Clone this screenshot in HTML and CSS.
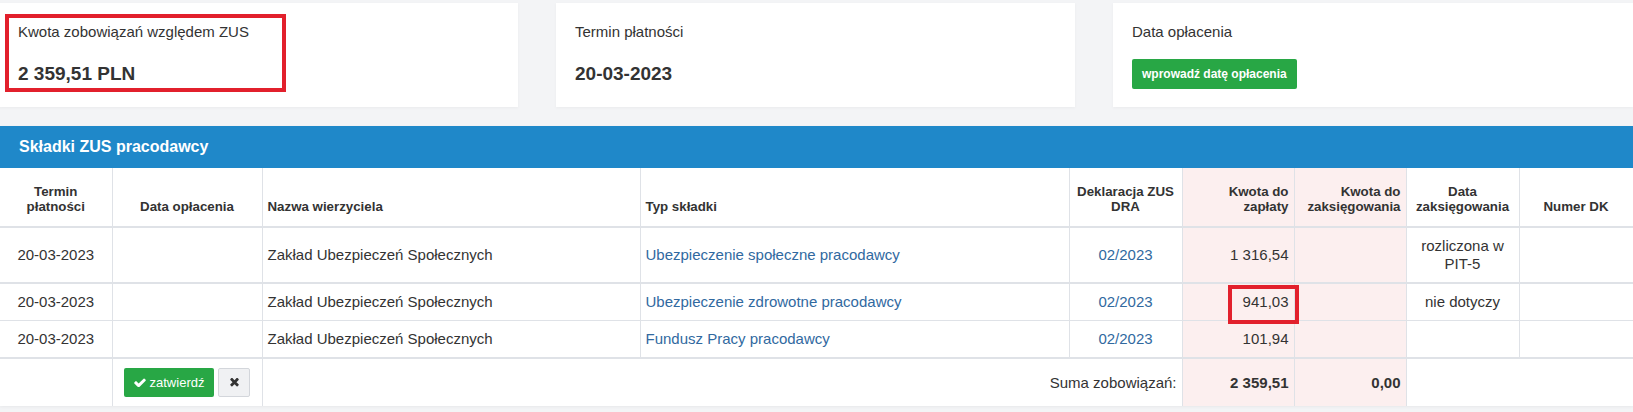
FILE: index.html
```html
<!DOCTYPE html>
<html lang="pl">
<head>
<meta charset="utf-8">
<title>Składki ZUS pracodawcy</title>
<link rel="stylesheet" href="styles.css">
</head>
<body>
<div class="page">
  <div class="cards">
    <div class="card">
      <div class="card-label">Kwota zobowiązań względem ZUS</div>
      <div class="card-value">2 359,51 PLN</div>
      <div class="mark mark-card"></div>
    </div>
    <div class="card">
      <div class="card-label">Termin płatności</div>
      <div class="card-value">20-03-2023</div>
    </div>
    <div class="card card-last">
      <div class="card-label">Data opłacenia</div>
      <span class="btn-date">wprowadź datę opłacenia</span>
    </div>
  </div>

  <section class="panel">
    <div class="panel-head">Składki ZUS pracodawcy</div>
    <table class="grid">
      <colgroup>
        <col class="c1"><col class="c2"><col class="c3"><col class="c4"><col class="c5"><col class="c6"><col class="c7"><col class="c8"><col class="c9">
      </colgroup>
      <thead>
        <tr>
          <th class="center">Termin<br>płatności</th>
          <th class="center">Data opłacenia</th>
          <th class="left">Nazwa wierzyciela</th>
          <th class="left">Typ składki</th>
          <th class="center">Deklaracja ZUS<br>DRA</th>
          <th class="right pink">Kwota do<br>zapłaty</th>
          <th class="right pink">Kwota do<br>zaksięgowania</th>
          <th class="center">Data<br>zaksięgowania</th>
          <th class="center last">Numer DK</th>
        </tr>
      </thead>
      <tbody>
        <tr class="row-thick">
          <td class="center">20-03-2023</td>
          <td></td>
          <td>Zakład Ubezpieczeń Społecznych</td>
          <td><a class="link" href="#">Ubezpieczenie społeczne pracodawcy</a></td>
          <td class="center"><a class="link" href="#">02/2023</a></td>
          <td class="right pink">1 316,54</td>
          <td class="pink"></td>
          <td class="center">rozliczona w<br>PIT-5</td>
          <td class="last"></td>
        </tr>
        <tr>
          <td class="center">20-03-2023</td>
          <td></td>
          <td>Zakład Ubezpieczeń Społecznych</td>
          <td><a class="link" href="#">Ubezpieczenie zdrowotne pracodawcy</a></td>
          <td class="center"><a class="link" href="#">02/2023</a></td>
          <td class="right pink anchor">941,03<div class="mark mark-cell"></div></td>
          <td class="pink"></td>
          <td class="center">nie dotyczy</td>
          <td class="last"></td>
        </tr>
        <tr class="row-thick">
          <td class="center">20-03-2023</td>
          <td></td>
          <td>Zakład Ubezpieczeń Społecznych</td>
          <td><a class="link" href="#">Fundusz Pracy pracodawcy</a></td>
          <td class="center"><a class="link" href="#">02/2023</a></td>
          <td class="right pink">101,94</td>
          <td class="pink"></td>
          <td></td>
          <td class="last"></td>
        </tr>
      </tbody>
      <tfoot>
        <tr>
          <td></td>
          <td class="center">
            <div class="actions">
              <span class="btn-ok"><svg class="ico-check" viewBox="100 300 1592 1150" aria-hidden="true"><path d="M1671 566q0 40-28 68l-724 724-136 136q-28 28-68 28t-68-28l-136-136-362-362q-28-28-28-68t28-68l136-136q28-28 68-28t68 28l294 295 656-657q28-28 68-28t68 28l136 136q28 28 28 68z"/></svg>zatwierdź</span>
              <span class="btn-cancel"><svg class="ico-times" viewBox="80 380 1248 1248" aria-hidden="true"><path d="M1298 1322q0 40-28 68l-136 136q-28 28-68 28t-68-28l-294-294-294 294q-28 28-68 28t-68-28l-136-136q-28-28-28-68t28-68l294-294-294-294q-28-28-28-68t28-68l136-136q28-28 68-28t68 28l294 294 294-294q28-28 68-28t68 28l136 136q28 28 28 68t-28 68l-294 294 294 294q28 28 28 68z"/></svg></span>
            </div>
          </td>
          <td colspan="3" class="right">Suma zobowiązań:</td>
          <td class="right pink strong">2 359,51</td>
          <td class="right pink strong">0,00</td>
          <td colspan="2" class="last"></td>
        </tr>
      </tfoot>
    </table>
  </section>
</div>
</body>
</html>
```

FILE: styles.css
```css
* { box-sizing: border-box; }

html, body {
  margin: 0;
  background: #f3f4f6;
}

body {
  width: 1633px;
  height: 412px;
  overflow: hidden;
  font-family: "Liberation Sans", Arial, sans-serif;
  color: #333;
}

.page {
  padding-top: 3px;
}

/* summary cards */
.cards {
  display: flex;
  gap: 38px;
  margin-left: -1px;
}

.card {
  position: relative;
  flex: 0 0 519px;
  height: 104px;
  background: #fff;
  padding: 20px 19px 0;
  box-shadow: 0 1px 3px rgba(0, 0, 0, 0.04);
}

.card-last {
  flex: 1 1 auto;
}

.card-label {
  font-size: 15px;
  line-height: 18px;
  color: #333;
}

.card-value {
  margin-top: 22px;
  font-size: 19px;
  line-height: 22px;
  font-weight: bold;
  color: #333;
}

.btn-date {
  display: inline-block;
  margin-top: 18px;
  height: 30px;
  padding: 0 10px;
  line-height: 30px;
  background: #28a745;
  color: #fff;
  font-size: 12px;
  font-weight: bold;
  border-radius: 2px;
}

/* red annotation frames */
.mark {
  position: absolute;
  border: 4px solid #e2202c;
  pointer-events: none;
}

.mark-card {
  left: 6px;
  top: 11px;
  width: 281px;
  height: 78px;
}

.anchor {
  position: relative;
}

.mark-cell {
  left: 45px;
  top: 1px;
  width: 71px;
  height: 39px;
}

/* panel */
.panel {
  margin-top: 19px;
  background: #fff;
  box-shadow: 0 1px 3px rgba(0, 0, 0, 0.05);
}

.panel-head {
  height: 42px;
  display: flex;
  align-items: center;
  padding-left: 19px;
  background: #1f88c9;
  color: #fff;
  font-size: 16px;
  font-weight: bold;
}

.grid {
  width: 1633px;
  table-layout: fixed;
  border-collapse: collapse;
  font-size: 15px;
  color: #333;
}

.c1 { width: 112px; }
.c2 { width: 150px; }
.c3 { width: 378px; }
.c4 { width: 429px; }
.c5 { width: 113px; }
.c6 { width: 112px; }
.c7 { width: 112px; }
.c8 { width: 113px; }
.c9 { width: 114px; }

.grid th,
.grid td {
  border: 1px solid #dfe2e7;
  padding: 9px 5px;
  line-height: 18px;
  vertical-align: middle;
  text-align: left;
  font-weight: normal;
}

.grid th:first-child,
.grid td:first-child {
  border-left: none;
}

.grid thead th {
  border-top: none;
  border-bottom: 2px solid #dfe2e7;
  padding: 17px 5px 12px;
  font-size: 13.3px;
  line-height: 14.5px;
  font-weight: bold;
  vertical-align: bottom;
}

.grid tr.row-thick td {
  border-bottom: 2px solid #dfe2e7;
}

.grid tfoot td {
  border-bottom: none;
}

.grid .center { text-align: center; }
.grid .right { text-align: right; }
.grid .left { text-align: left; }
.grid .pink { background: #fcefef; }
.grid .strong { font-weight: bold; }

.link {
  color: #31699f;
  text-decoration: none;
}

/* footer actions */
.actions {
  display: flex;
  justify-content: center;
  gap: 4px;
}

.btn-ok {
  display: inline-flex;
  align-items: center;
  gap: 4px;
  height: 29px;
  padding: 0 10px;
  background: #28a745;
  color: #fff;
  font-size: 13px;
  border-radius: 2px;
}

.ico-check {
  width: 12px;
  height: 9px;
  fill: #fff;
}

.btn-cancel {
  display: inline-flex;
  align-items: center;
  justify-content: center;
  width: 32px;
  height: 29px;
  background: #f0f1f3;
  border: 1px solid #d3d6db;
  border-radius: 2px;
}

.ico-times {
  width: 9px;
  height: 9px;
  fill: #333;
}
```
